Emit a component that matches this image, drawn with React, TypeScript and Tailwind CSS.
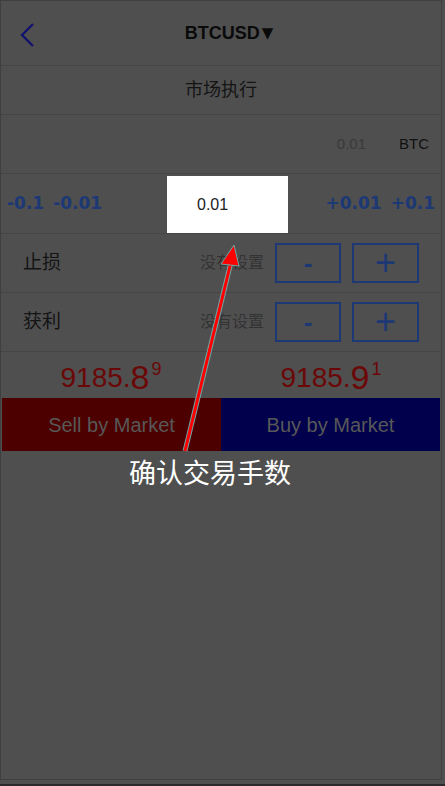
import React from "react";

const sans = { fontFamily: '"Liberation Sans", "Noto Sans CJK SC", sans-serif' };
const wide = { fontFamily: '"DejaVu Sans", sans-serif' };

const Stepper = ({ label }: { label: string }) => (
  <div className="flex h-[59px] items-center border-b border-[#454545] pl-[22px] pr-[22px]">
    <span className="text-[19px] text-[#141414]">{label}</span>
    <span className="ml-auto mr-[11px] text-[16px] text-[#333]">没有设置</span>
    <button className="flex h-[40px] w-[66px] items-center justify-center border-2 border-[#1c3875] text-[26px] font-bold leading-none text-[#1c3875]">
      -
    </button>
    <button className="ml-[11px] flex h-[40px] w-[67px] items-center justify-center border-2 border-[#1c3875] text-[36px] leading-none text-[#1c3875]">
      +
    </button>
  </div>
);

const Price = ({ main, big, sup }: { main: string; big: string; sup: string }) => (
  <div className="flex flex-1 items-start justify-center pt-[8px]">
    <span className="mt-[4px] text-[28px] leading-none">{main}</span>
    <span className="text-[34px] leading-none">{big}</span>
    <span className="ml-[2px] text-[18px] leading-none">{sup}</span>
  </div>
);

export default function App() {
  return (
    <div className="relative h-[786px] w-[445px] overflow-hidden bg-[#4f4f4f]" style={sans}>
      <div className="flex h-[780px] w-[442px] flex-col border border-[#3f3f3f]">
        {/* header */}
        <div className="relative flex h-[65px] shrink-0 items-center justify-center border-b border-[#454545] pl-[16px]">
          <svg className="absolute left-[18px] top-[22px]" width="18" height="24" viewBox="0 0 18 24">
            <path d="M14 1 L3 12 L14 23" fill="none" stroke="#10106e" strokeWidth="2.2" />
          </svg>
          <span className="text-[18px] font-bold text-[#0a0a0a]">BTCUSD</span>
          <span className="ml-[2px] text-[15px] text-[#0a0a0a]" style={wide}>▼</span>
        </div>
        <div className="flex h-[49px] shrink-0 items-center justify-center border-b border-[#454545] text-[18px] text-[#141414]">
          市场执行
        </div>
        <div className="flex h-[59px] shrink-0 items-center justify-end gap-[33px] border-b border-[#454545] pr-[12px] text-[15px]">
          <span className="text-[#3a3a3a]">0.01</span>
          <span className="text-[#111]">BTC</span>
        </div>
        {/* lot row */}
        <div className="flex h-[60px] shrink-0 items-center border-b border-[#454545] text-[17px] font-bold text-[#1c3875]" style={wide}>
          <div className="flex w-[166px] shrink-0 items-center gap-[9px] pl-[6px]">
            <span>-0.1</span>
            <span>-0.01</span>
          </div>
          <div className="mt-[2px] flex h-[57px] w-[121px] items-center self-start bg-white pl-[30px] text-[16px] font-normal text-[#222]" style={sans}>
            0.01
          </div>
          <span className="ml-auto">+0.01</span>
          <span className="ml-[9px] mr-[6px]">+0.1</span>
        </div>
        <Stepper label="止损" />
        <Stepper label="获利" />
        {/* prices */}
        <div className="flex h-[46px] shrink-0 text-[#6a0808]">
          <Price main="9185." big="8" sup="9" />
          <Price main="9185." big="9" sup="1" />
        </div>
        <div className="flex h-[53px] shrink-0 px-[1px] text-[20px] text-[#585858]">
          <div className="flex flex-1 items-center justify-center bg-[#4c0000]">Sell by Market</div>
          <div className="flex flex-1 items-center justify-center bg-[#00004c]">Buy by Market</div>
        </div>
      </div>
      <div className="mt-[4px] h-[2px] bg-[#2a2a2a]" />

      {/* guide overlay */}
      <svg className="pointer-events-none absolute left-0 top-0" width="445" height="786">
        <line x1="185" y1="451" x2="231" y2="262" stroke="#6fa5a5" strokeWidth="5" />
        <line x1="185" y1="451" x2="231" y2="262" stroke="#ff0000" strokeWidth="3" />
        <polygon points="234,245 221,264 239,266" fill="#ff0000" stroke="#6fa5a5" strokeWidth="1" />
      </svg>
      <div className="absolute left-0 top-[454px] w-[420px] text-center text-[27px] text-white">
        确认交易手数
      </div>
    </div>
  );
}
